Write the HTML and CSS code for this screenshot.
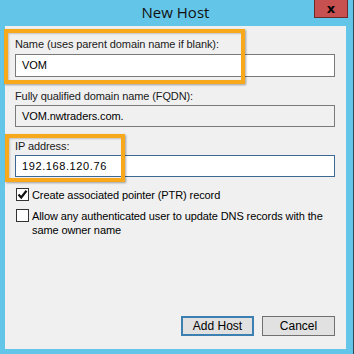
FILE: index.html
```html
<!DOCTYPE html>
<html lang="en">
<head>
  <meta charset="UTF-8" />
  <title>New Host</title>
  <link rel="stylesheet" href="styles.css">
</head>
<body>

<div class="window">
  <div class="titlebar">
    <span class="title">New Host</span>
    <button class="close-btn">x</button>
  </div>

  <div class="client">
    <!-- highlight boxes drawn over the form -->
    <div class="mark mark-name"></div>
    <div class="mark mark-ip"></div>

    <div class="field field-first">
      <label class="field-label">Name (uses parent domain name if blank):</label>
      <div class="textbox">VOM</div>
    </div>

    <div class="field">
      <label class="field-label">Fully qualified domain name (FQDN):</label>
      <div class="textbox readonly">VOM.nwtraders.com.</div>
    </div>

    <div class="field">
      <label class="field-label">IP address:</label>
      <div class="textbox focused">192.168.120.76</div>
    </div>

    <div class="check-row check-first">
      <span class="checkbox checked">
        <svg width="11" height="11" viewBox="0 0 11 11"><path d="M1.5 5.5 L4.2 8.5 L9.5 1.8" fill="none" stroke="#111" stroke-width="2.2"/></svg>
      </span>
      <span class="check-label">Create associated pointer (PTR) record</span>
    </div>

    <div class="check-row">
      <span class="checkbox"></span>
      <span class="check-label wide">Allow any authenticated user to update DNS records with the same owner name</span>
    </div>

    <div class="buttons">
      <button class="btn btn-default">Add Host</button>
      <button class="btn">Cancel</button>
    </div>
  </div>
</div>

</body>
</html>
```

FILE: styles.css
```css
* {
  margin: 0;
  padding: 0;
  box-sizing: border-box;
}

body {
  font-family: 'Liberation Sans', Arial, sans-serif;
  font-size: 11px;
  letter-spacing: -0.1px;
  color: #000;
  background: #63c6e9;
}

.window {
  width: 354px;
  height: 354px;
  background: #63c6e9;
  border-right: 1px solid #2a4a5a;
  position: relative;
}

.titlebar {
  height: 26px;
  display: flex;
  align-items: center;
  justify-content: center;
  position: relative;
}

.title {
  font-family: 'Open Sans', sans-serif;
  font-size: 15px;
  letter-spacing: 0;
  color: #111;
  margin-left: -2px;
  margin-top: -2px;
}

.close-btn {
  position: absolute;
  top: 0;
  right: 5px;
  width: 34px;
  height: 18px;
  background: #c75050;
  border: 1px solid #6e2a2a;
  border-top: none;
  font-family: 'DejaVu Sans', sans-serif;
  font-weight: bold;
  font-size: 13px;
  line-height: 14px;
  color: #000;
}

.client {
  position: relative;
  margin-left: 5px;
  width: 341px;
  height: 323px;
  background: #f0f0f0;
  padding: 0 11px 0 10px;
  display: flex;
  flex-direction: column;
}

/* orange call-out boxes */
.mark {
  position: absolute;
  border: 4px solid #f7a81b;
  box-shadow: 1px 1px 2px rgba(0, 0, 0, 0.35), inset 1px 1px 2px rgba(0, 0, 0, 0.2);
  z-index: 2;
}

.mark-name {
  left: -1px;
  top: 3px;
  width: 241px;
  height: 55px;
}

.mark-ip {
  left: 0;
  top: 108px;
  width: 120px;
  height: 48px;
}

.field {
  display: flex;
  flex-direction: column;
  margin-top: 12px;
}

.field-first {
  margin-top: 11px;
}

.field-label {
  line-height: 14px;
  margin-bottom: 2px;
  color: #1a1a1a;
}

.field-first .field-label {
  margin-bottom: 3px;
}

.textbox {
  height: 22px;
  width: 320px;
  border: 1px solid #7a7a7a;
  background: #fff;
  padding: 0 6px;
  line-height: 20px;
}

.field-first .textbox {
  height: 23px;
  line-height: 21px;
}

.textbox.readonly {
  background: #f0f0f0;
}

.textbox.focused {
  border-color: #3c6894;
  letter-spacing: 0.6px;
}

.check-row {
  display: flex;
  align-items: flex-start;
  margin-top: 7px;
  margin-left: 1px;
}

.check-first {
  margin-top: 11px;
}

.checkbox {
  width: 13px;
  height: 13px;
  border: 1px solid #333;
  background: #fff;
  flex: none;
  display: flex;
  align-items: center;
  justify-content: center;
}

.check-label {
  margin-left: 3px;
  line-height: 14px;
}

.check-label.wide {
  width: 300px;
}

.buttons {
  margin-top: auto;
  margin-bottom: 13px;
  display: flex;
  justify-content: flex-end;
  gap: 8px;
}

.btn {
  width: 73px;
  height: 20px;
  font-family: 'Liberation Sans', Arial, sans-serif;
  font-size: 12px;
  background: #e1e1e1;
  border: 1px solid #707070;
  color: #000;
}

.btn-default {
  border: 2px solid #3c7fb1;
}
```
